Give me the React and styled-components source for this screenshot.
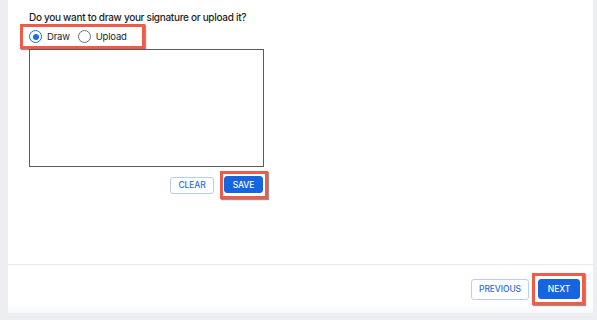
import React, { useState } from "react";
import styled, { createGlobalStyle } from "styled-components";

const GlobalStyle = createGlobalStyle`
	html, body {
		margin: 0;
		padding: 0;
		background: #eceef2;
		font-family: Inter, "Noto Sans", sans-serif;
		overflow: hidden;
	}
`;

const Page = styled.div`
	width: 597px;
	height: 320px;
	display: flex;
	padding-left: 8px;
	box-sizing: border-box;
`;

const Panel = styled.div`
	width: 585px;
	height: 313px;
	background: #ffffff;
	display: flex;
	flex-direction: column;
`;

const Content = styled.div`
	flex: 1;
	padding: 10px 0 0 21px;
	border-bottom: 1px solid #e7e9ec;
	display: flex;
	flex-direction: column;
	align-items: flex-start;
`;

const Question = styled.div`
	font-size: 10px;
	line-height: 14px;
	letter-spacing: -0.3px;
	color: #1d1f24;
	font-weight: 500;
`;

const Highlight = styled.div`
	display: inline-flex;
	align-items: center;
	border: 3px solid #ef5a49;
	box-shadow: 1px 1px 1px rgba(60, 60, 60, 0.55);
	padding: ${({ $pad }) => $pad};
	margin: ${({ $margin }) => $margin || "0"};
`;

const RadioLabel = styled.label`
	display: inline-flex;
	align-items: center;
	gap: 5px;
	font-size: 9.5px;
	line-height: 13px;
	font-weight: 400;
	letter-spacing: -0.2px;
	color: #23252b;
	margin-right: ${({ $last }) => ($last ? "0" : "8px")};
	cursor: pointer;
`;

const RadioDot = styled.span`
	width: 13px;
	height: 13px;
	box-sizing: border-box;
	border-radius: 50%;
	border: 1.5px solid ${({ $on }) => ($on ? "#1b6ce6" : "#6b6e75")};
	display: inline-flex;
	align-items: center;
	justify-content: center;
	&::after {
		content: "";
		width: 6px;
		height: 6px;
		border-radius: 50%;
		background: #1b6ce6;
		display: ${({ $on }) => ($on ? "block" : "none")};
	}
`;

const Pad = styled.div`
	width: 235px;
	height: 118px;
	box-sizing: border-box;
	border: 1px solid #5b5b5b;
	background: #fff;
`;

const PadActions = styled.div`
	width: 239px;
	display: flex;
	justify-content: flex-end;
	align-items: center;
	gap: 6px;
	margin-top: 4px;
`;

const Button = styled.button`
	width: ${({ $w }) => $w}px;
	height: ${({ $h }) => $h}px;
	padding: 0;
	box-sizing: border-box;
	border-radius: 3px;
	font-family: Inter, "Noto Sans", sans-serif;
	font-size: 8.5px;
	font-weight: 500;
	letter-spacing: -0.1px;
	cursor: pointer;
	border: 1px solid ${({ $primary }) => ($primary ? "#1565e0" : "#b8cdf4")};
	background: ${({ $primary }) => ($primary ? "#1565e0" : "#ffffff")};
	color: ${({ $primary }) => ($primary ? "#ffffff" : "#2f6fd6")};
`;

const Footer = styled.div`
	height: 48px;
	display: flex;
	justify-content: flex-end;
	align-items: center;
	padding-right: 8px;
	gap: 3px;
	background: linear-gradient(#ffffff 80%, #f8f9fa);
`;

export default function App() {
	const [mode, setMode] = useState("draw");

	return (
		<>
			<GlobalStyle />
			<Page>
				<Panel>
					<Content>
						<Question>Do you want to draw your signature or upload it?</Question>
						<Highlight $pad="3px 15px 3px 6px" $margin="0 0 0 -9px">
							<RadioLabel onClick={() => setMode("draw")}>
								<RadioDot $on={mode === "draw"} />
								Draw
							</RadioLabel>
							<RadioLabel $last onClick={() => setMode("upload")}>
								<RadioDot $on={mode === "upload"} />
								Upload
							</RadioLabel>
						</Highlight>
						<Pad />
						<PadActions>
							<Button $w={44} $h={17}>CLEAR</Button>
							<Highlight $pad="2px 2px 3px 1px">
								<Button $primary $w={39} $h={17}>SAVE</Button>
							</Highlight>
						</PadActions>
					</Content>
					<Footer>
						<Button $w={58} $h={21}>PREVIOUS</Button>
						<Highlight $pad="3px 2px 3px 3px">
							<Button $primary $w={42} $h={20}>NEXT</Button>
						</Highlight>
					</Footer>
				</Panel>
			</Page>
		</>
	);
}
